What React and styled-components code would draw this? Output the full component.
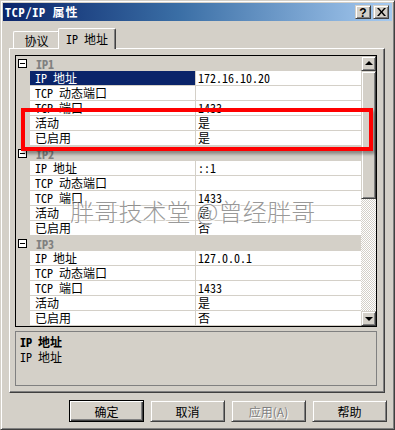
import React from 'react';
import styled, { createGlobalStyle, css } from 'styled-components';

const GlobalStyle = createGlobalStyle`
  html, body {
    margin: 0;
    padding: 0;
    background: #d4d0c8;
  }
  * {
    box-sizing: border-box;
  }
`;

const FONT = `"Noto Sans Mono CJK SC", "Noto Sans CJK SC", "Liberation Mono", monospace`;
const UI_FONT = `"Noto Sans CJK SC", "Liberation Sans", sans-serif`;

const groups = [
  {
    name: 'IP1',
    rows: [
      ['IP 地址', '172.16.10.20'],
      ['TCP 动态端口', ''],
      ['TCP 端口', '1433'],
      ['活动', '是'],
      ['已启用', '是'],
    ],
  },
  {
    name: 'IP2',
    rows: [
      ['IP 地址', '::1'],
      ['TCP 动态端口', ''],
      ['TCP 端口', '1433'],
      ['活动', '是'],
      ['已启用', '否'],
    ],
  },
  {
    name: 'IP3',
    rows: [
      ['IP 地址', '127.0.0.1'],
      ['TCP 动态端口', ''],
      ['TCP 端口', '1433'],
      ['活动', '是'],
      ['已启用', '否'],
    ],
  },
];

const raised = css`
  border: 1px solid;
  border-color: #d4d0c8 #404040 #404040 #d4d0c8;
  box-shadow: inset 1px 1px #fff, inset -1px -1px #808080;
  background: #d4d0c8;
`;

function App() {
  return (
    <>
      <GlobalStyle />
      <Window>
        <TitleBar>
          <TitleText>TCP/IP 属性</TitleText>
          <TitleButtons>
            <CaptionButton>?</CaptionButton>
            <CaptionButton $close>
              <svg width="9" height="8" viewBox="0 0 9 8">
                <path d="M0 0h2l2.5 3L7 0h2L5.5 4 9 8H7L4.5 5 2 8H0l3.5-4z" fill="#000" />
              </svg>
            </CaptionButton>
          </TitleButtons>
        </TitleBar>

        <Tabs>
          <Tab>协议</Tab>
          <Tab $active>IP 地址</Tab>
        </Tabs>

        <Panel>
          <Grid>
            <Rows>
              {groups.map((g, gi) => (
                <React.Fragment key={g.name}>
                  <CategoryRow>
                    <Toggle />
                    <CategoryName>{g.name}</CategoryName>
                  </CategoryRow>
                  {g.rows.map(([name, value], ri) => (
                    <PropRow key={name}>
                      <Gutter />
                      <NameCell $selected={gi === 0 && ri === 0}>{name}</NameCell>
                      <ValueCell>{value}</ValueCell>
                    </PropRow>
                  ))}
                </React.Fragment>
              ))}
            </Rows>
            <ScrollBar>
              <ScrollButton>
                <Arrow />
              </ScrollButton>
              <Thumb />
              <Track />
              <ScrollButton>
                <Arrow $down />
              </ScrollButton>
            </ScrollBar>
          </Grid>

          <DescBox>
            <DescTitle>IP 地址</DescTitle>
            <DescText>IP 地址</DescText>
          </DescBox>
        </Panel>

        <ButtonRow>
          <Button $default>确定</Button>
          <Button>取消</Button>
          <Button $disabled>应用(A)</Button>
          <Button>帮助</Button>
        </ButtonRow>

        <Highlight />
        <Watermark>胖哥技术堂 @曾经胖哥</Watermark>
      </Window>
    </>
  );
}

export default App;

const Window = styled.div`
  position: relative;
  width: 395px;
  height: 430px;
  padding: 2px;
  border: 1px solid;
  border-color: #d4d0c8 #404040 #404040 #d4d0c8;
  box-shadow: inset 1px 1px #fff, inset -1px -1px #808080;
  background: #d4d0c8;
  font-family: ${FONT};
  font-size: 12px;
  color: #000;
  overflow: hidden;
`;

const TitleBar = styled.div`
  height: 18px;
  display: flex;
  align-items: center;
  justify-content: space-between;
  padding: 0 3px 0 2px;
  background: linear-gradient(to right, #0a246a 0%, #3a6ea5 45%, #a6caf0 100%);
`;

const TitleText = styled.span`
  color: #fff;
  font-weight: bold;
  font-size: 12px;
  line-height: 18px;
  letter-spacing: 0.8px;
`;

const TitleButtons = styled.div`
  display: flex;
  gap: 2px;
`;

const CaptionButton = styled.div`
  ${raised};
  width: 16px;
  height: 14px;
  display: flex;
  align-items: center;
  justify-content: center;
  font-family: "Liberation Sans", sans-serif;
  font-weight: bold;
  font-size: 12px;
  line-height: 12px;
  padding-top: ${p => (p.$close ? '0' : '1px')};
`;

const Tabs = styled.div`
  display: flex;
  align-items: flex-end;
  height: 20px;
  margin: 7px 0 0 8px;
  position: relative;
  z-index: 1;
`;

const Tab = styled.div`
  position: relative;
  display: flex;
  align-items: center;
  justify-content: center;
  background: #d4d0c8;
  border-top: 1px solid #fff;
  border-left: 1px solid #fff;
  border-right: 1px solid #404040;
  box-shadow: inset -1px 0 #808080;
  border-radius: 2px 2px 0 0;
  font-size: 12px;
  ${p =>
    p.$active
      ? css`
          width: 58px;
          height: 21px;
          margin-left: -2px;
          margin-bottom: -1px;
          padding-bottom: 2px;
        `
      : css`
          width: 47px;
          height: 17px;
          margin-left: 2px;
          font-family: ${UI_FONT};
          padding-top: 1px;
        `}
`;

const Panel = styled.div`
  width: 376px;
  height: 345px;
  margin-left: 6px;
  display: flex;
  flex-direction: column;
  gap: 4px;
  padding: 6px 7px 6px 5px;
  border-top: 1px solid #fff;
  border-left: 1px solid #fff;
  border-right: 1px solid #404040;
  border-bottom: 1px solid #404040;
  box-shadow: inset -1px -1px #808080;
`;

const Grid = styled.div`
  width: 362px;
  height: 272px;
  display: flex;
  border: 1px solid #000;
  background: #fff;
`;

const Rows = styled.div`
  flex: 1;
  display: flex;
  flex-direction: column;
`;

const CategoryRow = styled.div`
  height: 15px;
  display: flex;
  align-items: center;
  background: #d4d0c8;
`;

const Toggle = styled.div`
  position: relative;
  width: 9px;
  height: 9px;
  margin: 0 0 0 2px;
  border: 1px solid #000;
  background: #fff;

  &::after {
    content: '';
    position: absolute;
    left: 1px;
    top: 3px;
    width: 5px;
    height: 1px;
    background: #000;
  }
`;

const CategoryName = styled.span`
  margin-left: 9px;
  font-weight: bold;
  color: #808080;
  line-height: 14px;
`;

const PropRow = styled.div`
  height: 15px;
  display: flex;
`;

const Gutter = styled.div`
  width: 14px;
  background: #d4d0c8;
`;

const cell = css`
  height: 15px;
  line-height: 14px;
  border-bottom: 1px solid #d4d0c8;
  white-space: nowrap;
`;

const NameCell = styled.div`
  ${cell};
  width: 166px;
  padding-left: 5px;
  border-right: 1px solid #d4d0c8;
  background: ${p => (p.$selected ? '#0a246a' : '#fff')};
  color: ${p => (p.$selected ? '#fff' : '#000')};
`;

const ValueCell = styled.div`
  ${cell};
  flex: 1;
  padding-left: 2px;
`;

const ScrollBar = styled.div`
  width: 15px;
  display: flex;
  flex-direction: column;
`;

const ScrollButton = styled.div`
  ${raised};
  height: 15px;
  display: flex;
  align-items: center;
  justify-content: center;
`;

const Arrow = styled.div`
  width: 0;
  height: 0;
  border-left: 4px solid transparent;
  border-right: 4px solid transparent;
  ${p =>
    p.$down
      ? css`
          border-top: 4px solid #000;
          margin-top: 1px;
        `
      : css`
          border-bottom: 4px solid #000;
          margin-bottom: 1px;
        `}
`;

const Thumb = styled.div`
  ${raised};
  height: 128px;
`;

const Track = styled.div`
  flex: 1;
  background: repeating-conic-gradient(#fff 0 25%, #d4d0c8 0 50%) 0 0 / 2px 2px;
`;

const DescBox = styled.div`
  width: 362px;
  height: 55px;
  border: 1px solid #808080;
  padding: 2px 4px;
  line-height: 15px;
`;

const DescTitle = styled.div`
  font-weight: bold;
`;

const DescText = styled.div``;

const ButtonRow = styled.div`
  display: flex;
  justify-content: flex-end;
  gap: 6px;
  margin-top: 7px;
  padding-right: 5px;
`;

const Button = styled.div`
  ${raised};
  width: 75px;
  height: 22px;
  display: flex;
  align-items: center;
  justify-content: center;
  font-family: ${UI_FONT};
  font-size: 12px;
  ${p =>
    p.$default &&
    css`
      border-color: #000;
      box-shadow: inset 1px 1px #fff, inset -1px -1px #404040, inset -2px -2px #808080;
    `}
  ${p =>
    p.$disabled &&
    css`
      color: #808080;
      text-shadow: 1px 1px #fff;
    `}
`;

const Highlight = styled.div`
  position: absolute;
  left: 20px;
  top: 107px;
  width: 352px;
  height: 43px;
  border: 4px solid #ff0000;
  box-shadow: 2px 3px 3px rgba(0, 0, 0, 0.35);
  pointer-events: none;
`;

const Watermark = styled.div`
  position: absolute;
  left: 69px;
  top: 195px;
  font-family: ${UI_FONT};
  font-size: 24px;
  font-weight: 300;
  line-height: 30px;
  letter-spacing: 0.2px;
  white-space: nowrap;
  color: rgba(120, 120, 120, 0.75);
  text-shadow: 1px 1px 0 rgba(255, 255, 255, 0.8), -1px -1px 0 rgba(255, 255, 255, 0.6);
  pointer-events: none;
`;
